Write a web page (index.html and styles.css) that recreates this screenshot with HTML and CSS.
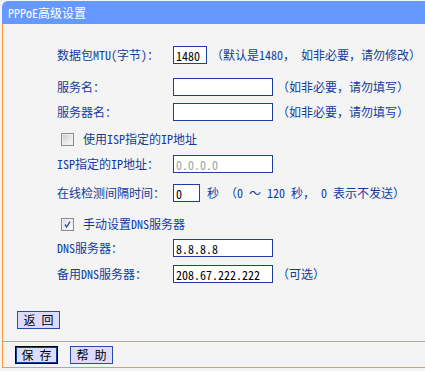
FILE: index.html
```html
<!DOCTYPE html>
<html lang="zh-CN">
<head>
<meta charset="utf-8">
<title>PPPoE高级设置</title>
<link rel="stylesheet" href="styles.css">
</head>
<body>
<div class="panel">
  <div class="title">PPPoE高级设置</div>
  <div class="content">
    <div class="form">
      <div class="row">
        <span class="label">数据包MTU(字节)：</span>
        <input class="field w-mtu" value="1480">
        <span class="hint">（默认是1480， 如非必要，请勿修改）</span>
      </div>
      <div class="row mt-8">
        <span class="label">服务名：</span>
        <input class="field" value="">
        <span class="hint">（如非必要，请勿填写）</span>
      </div>
      <div class="row mt-1">
        <span class="label">服务器名：</span>
        <input class="field" value="">
        <span class="hint">（如非必要，请勿填写）</span>
      </div>
      <div class="row mt-3">
        <span class="check"></span>
        <span class="check-text">使用ISP指定的IP地址</span>
      </div>
      <div class="row mt-1">
        <span class="label">ISP指定的IP地址：</span>
        <input class="field disabled" value="0.0.0.0" disabled>
      </div>
      <div class="row mt-5">
        <span class="label">在线检测间隔时间：</span>
        <input class="field w-sec" value="0">
        <span class="unit">秒 （0 ～ 120 秒， 0 表示不发送）</span>
      </div>
      <div class="row mt-7">
        <span class="check checked">
          <svg viewBox="0 0 13 13" width="13" height="13"><path d="M3.5 6.5 L5.5 9.5 L9.5 3" fill="none" stroke="#2b4fb8" stroke-width="1.6"/></svg>
        </span>
        <span class="check-text">手动设置DNS服务器</span>
      </div>
      <div class="row">
        <span class="label">DNS服务器：</span>
        <input class="field" value="8.8.8.8">
      </div>
      <div class="row mt-2">
        <span class="label">备用DNS服务器：</span>
        <input class="field" value="208.67.222.222">
        <span class="hint">（可选）</span>
      </div>
    </div>
    <div class="back-bar">
      <button class="btn">返 回</button>
    </div>
    <div class="footer">
      <button class="btn btn-default">保 存</button>
      <button class="btn">帮 助</button>
    </div>
  </div>
</div>
</body>
</html>
```
FILE: styles.css
```css
html, body {
  margin: 0;
  padding: 0;
  background: #f4f4f4;
}
body {
  font-family: "Noto Sans Mono CJK SC", "Noto Sans CJK SC", monospace;
  font-size: 12px;
  line-height: 14px;
}
.panel {
  padding-top: 1px;
  margin-left: 2px;
}
.title {
  height: 23px;
  line-height: 23px;
  background: #6699ff;
  color: #ffffff;
  border-top-left-radius: 6px;
  padding-left: 6px;
  font-size: 12px;
}
.content {
  border-left: 1px solid #ff9933;
  background: #f4f4f4;
}
.form {
  padding: 19px 0 0 54px;
  color: #103ca0;
}
.row {
  display: flex;
  align-items: center;
  height: 24px;
  white-space: nowrap;
}
.mt-1 { margin-top: 1px; }
.mt-2 { margin-top: 2px; }
.mt-3 { margin-top: 3px; }
.mt-5 { margin-top: 5px; }
.mt-7 { margin-top: 7px; }
.mt-8 { margin-top: 8px; }
.label {
  width: 116px;
  flex: none;
}
.field {
  box-sizing: border-box;
  width: 100px;
  height: 18px;
  margin: 0;
  padding: 0 2px;
  border: 1px solid #1d3f99;
  background: #ffffff;
  color: #000000;
  font-family: "Noto Sans Mono CJK SC", "Noto Sans CJK SC", monospace;
  font-size: 12px;
  outline: none;
}
.field.disabled {
  color: #a0a0a0;
  background: #ffffff;
}
.w-mtu { width: 34px; }
.w-sec { width: 27px; }
.hint {
  margin-left: 4px;
}
.unit {
  margin-left: 7px;
}
.check {
  box-sizing: border-box;
  width: 13px;
  height: 13px;
  margin-left: 4px;
  border: 1px solid #8c8c8c;
  background: linear-gradient(135deg, #c4c4c4 0%, #e6e6e6 50%, #fbfbfb 100%);
  box-shadow: inset 0 0 0 1px #f0f0f0;
  display: flex;
  align-items: center;
  justify-content: center;
}
.check svg {
  display: block;
}
.check.checked {
  background: linear-gradient(135deg, #dcdcdc 0%, #f2f2f2 60%, #ffffff 100%);
}
.check-text {
  margin-left: 9px;
}
.back-bar {
  padding: 25px 0 12px 14px;
}
.btn {
  box-sizing: border-box;
  width: 43px;
  height: 18px;
  margin: 0;
  padding: 0;
  border: 1px solid #2a4aa8;
  background: #dcdcff;
  color: #000000;
  font-family: "Noto Sans Mono CJK SC", "Noto Sans CJK SC", monospace;
  font-size: 12px;
  line-height: 16px;
  display: block;
}
.btn-default {
  border: 1px solid #000000;
  box-shadow: inset 0 0 0 1px #1a3a9a;
}
.footer {
  display: flex;
  gap: 12px;
  border-top: 1px solid #ff9933;
  border-bottom: 1px solid #ff9933;
  padding: 4px 0 3px 12px;
}
```
